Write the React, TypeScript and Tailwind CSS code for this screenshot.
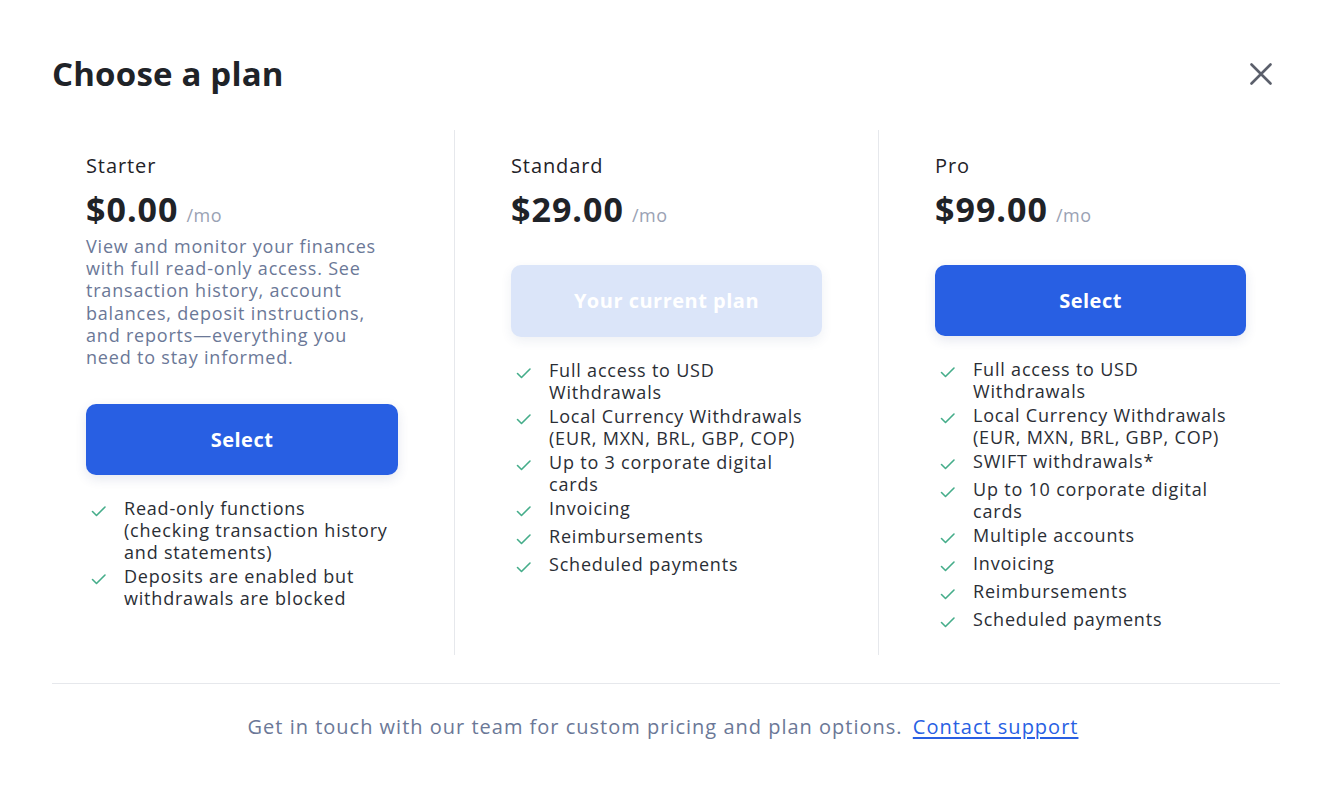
import React from "react";

type Plan = {
  name: string;
  price: string;
  description?: string;
  button: "select" | "current";
  features: string[];
};

const plans: Plan[] = [
  {
    name: "Starter",
    price: "$0.00",
    description:
      "View and monitor your finances with full read-only access. See transaction history, account balances, deposit instructions, and reports—everything you need to stay informed.",
    button: "select",
    features: [
      "Read-only functions (checking transaction history and statements)",
      "Deposits are enabled but withdrawals are blocked",
    ],
  },
  {
    name: "Standard",
    price: "$29.00",
    button: "current",
    features: [
      "Full access to USD Withdrawals",
      "Local Currency Withdrawals (EUR, MXN, BRL, GBP, COP)",
      "Up to 3 corporate digital cards",
      "Invoicing",
      "Reimbursements",
      "Scheduled payments",
    ],
  },
  {
    name: "Pro",
    price: "$99.00",
    button: "select",
    features: [
      "Full access to USD Withdrawals",
      "Local Currency Withdrawals (EUR, MXN, BRL, GBP, COP)",
      "SWIFT withdrawals*",
      "Up to 10 corporate digital cards",
      "Multiple accounts",
      "Invoicing",
      "Reimbursements",
      "Scheduled payments",
    ],
  },
];

const Check = () => (
  <svg width="18" height="18" viewBox="0 0 18 18" fill="none" className="mt-[5px]">
    <path d="M2.5 9.5 L6.5 13.5 L15 5" stroke="#45ad8a" strokeWidth="1.6" strokeLinecap="round" strokeLinejoin="round" />
  </svg>
);

export default function App() {
  return (
    <div
      className="w-[1326px] h-[792px] bg-white text-[#1f2328] overflow-hidden"
      style={{ fontFamily: '"Open Sans", "DejaVu Sans", sans-serif' }}
    >
      <div className="flex items-center justify-between pl-[52px] pr-[52px] pt-[54px]">
        <h1 className="text-[33px] leading-[40px] font-bold tracking-[0.2px] text-[#1f2328]">Choose a plan</h1>
        <button className="w-[32px] h-[32px] flex items-center justify-center mr-[-3px]">
          <svg width="24" height="24" viewBox="0 0 24 24" fill="none">
            <path d="M2.5 2.5 L21.5 21.5 M21.5 2.5 L2.5 21.5" stroke="#5b5f6b" strokeWidth="2.6" strokeLinecap="round" />
          </svg>
        </button>
      </div>

      <div className="ml-[30px] w-[1272px] mt-[36px] grid grid-cols-3 h-[525px]">
        {plans.map((p, i) => (
          <div key={p.name} className={`px-[56px] pt-[24px] ${i > 0 ? "border-l border-[#e6e8ec]" : ""}`}>
            <div className="text-[20px] leading-[24px] font-normal tracking-[0.9px]">{p.name}</div>
            <div className="mt-[12px] flex items-baseline gap-[8px]">
              <span className="text-[34px] leading-[38px] font-bold tracking-[1px]">{p.price}</span>
              <span className="text-[18px] text-[#9aa2b4] tracking-[0.5px]">/mo</span>
            </div>
            {p.description && (
              <p className="mt-[6px] text-[18px] leading-[22.2px] text-[#6b7897] tracking-[0.8px]">{p.description}</p>
            )}
            {p.button === "select" ? (
              <button className="mt-[36px] w-full h-[71px] rounded-[10px] bg-[#285fe3] text-white text-[20px] font-bold tracking-[0.5px] shadow-[0_4px_12px_rgba(40,60,120,0.12)]">
                Select
              </button>
            ) : (
              <button className="mt-[36px] w-full h-[72px] rounded-[10px] bg-[#dbe5f9] text-white text-[20px] font-bold tracking-[0.5px] shadow-[0_4px_12px_rgba(40,60,120,0.08)]">
                Your current plan
              </button>
            )}
            <ul className="flex flex-col gap-[2px] mt-[22px] pr-[4px]">
              {p.features.map((f) => (
                <li key={f} className="flex min-h-[26px]">
                  <div className="w-[38px] pl-[4px] shrink-0">
                    <Check />
                  </div>
                  <span className="text-[18px] leading-[22px] text-[#2a2e35] tracking-[0.8px]">{f}</span>
                </li>
              ))}
            </ul>
          </div>
        ))}
      </div>

      <div className="ml-[52px] w-[1228px] mt-[28px] border-t border-[#e6e8ec]" />
      <div className="mt-[28px] text-center text-[20px] text-[#6b7897] tracking-[1px]">
        Get in touch with our team for custom pricing and plan options.{" "}
        <a href="#" className="ml-[4px] text-[#285fe3] underline underline-offset-[3px]">
          Contact support
        </a>
      </div>
    </div>
  );
}
